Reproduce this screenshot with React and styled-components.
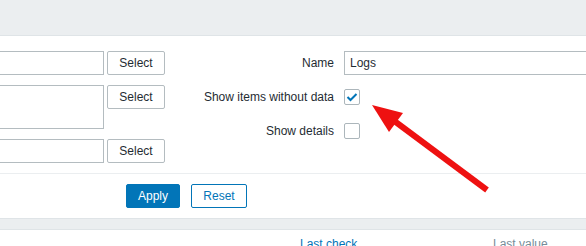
import React from 'react'
import styled, { createGlobalStyle } from 'styled-components'

const GlobalStyle = createGlobalStyle`
  body {
    margin: 0;
    overflow: hidden;
    background: #ffffff;
    font-family: "Liberation Sans", Arial, sans-serif;
    font-size: 12px;
    color: #1f2c33;
  }
`

const Page = styled.div`
  position: relative;
  width: 586px;
  height: 246px;
  overflow: hidden;
`

const TopBand = styled.div`
  height: 35px;
  background: #ebeef0;
  border-bottom: 1px solid #dfe4e7;
`

const Filter = styled.div`
  display: flex;
  align-items: flex-start;
  padding: 15px 0 10px;
  border-bottom: 1px solid #ebeef0;
`

const LeftCol = styled.div`
  margin-left: -40px;
  display: grid;
  grid-template-columns: 144px 58px;
  column-gap: 3px;
  row-gap: 10px;
  align-items: start;
`

const RightCol = styled.div`
  flex: 1;
  display: grid;
  grid-template-columns: 169px 1fr;
  column-gap: 10px;
  row-gap: 10px;
  grid-auto-rows: 24px;
  align-items: center;
`

const Label = styled.label`
  text-align: right;
  white-space: nowrap;
  line-height: 14px;
`

const Field = styled.input`
  box-sizing: border-box;
  height: 24px;
  width: ${p => p.$width || '100%'};
  margin: 0;
  padding: 0 5px;
  border: 1px solid #b4bcc0;
  border-radius: 0;
  background: #fff;
  font: inherit;
  color: #1f2c33;
  outline: none;
`

const Area = styled.div`
  box-sizing: border-box;
  height: 44px;
  border: 1px solid #b4bcc0;
  background: #fff;
`

const SelectButton = styled.button`
  box-sizing: border-box;
  height: 24px;
  width: 58px;
  margin: 0;
  padding: 0;
  border: 1px solid #b4bcc0;
  border-radius: 2px;
  background: #fff;
  font: inherit;
  color: #1f2c33;
`

const Check = styled.span`
  box-sizing: border-box;
  display: flex;
  align-items: center;
  justify-content: center;
  width: 16px;
  height: 16px;
  border: 1px solid #acb6bb;
  border-radius: 2px;
  background: #fff;
`

const Actions = styled.div`
  display: flex;
  gap: 11px;
  padding: 10px 0 10px 126px;
`

const ActionButton = styled.button`
  box-sizing: border-box;
  height: 24px;
  width: ${p => p.$width}px;
  margin: 0;
  padding: 0;
  border: 1px solid #0275b8;
  border-radius: 2px;
  background: ${p => (p.$primary ? '#0275b8' : '#fff')};
  color: ${p => (p.$primary ? '#fff' : '#0275b8')};
  font: inherit;
`

const Band = styled.div`
  height: 10px;
  background: #ebeef0;
  border-top: 1px solid #dfe4e7;
  border-bottom: 1px solid #dfe4e7;
`

const TableHead = styled.div`
  display: flex;
  padding-top: 7px;
  line-height: 14px;
  white-space: nowrap;
`

const HeadCell = styled.span`
  flex: none;
  width: ${p => p.$width}px;
  padding-left: ${p => p.$left || 0}px;
  color: ${p => (p.$link ? '#0275b8' : '#768d99')};
`

const Arrow = styled.svg`
  position: absolute;
  left: 0;
  top: 0;
  pointer-events: none;
`

const Checkbox = ({ checked }) => (
  <Check>
    {checked && (
      <svg width="12" height="12" viewBox="0 0 12 12">
        <polyline
          points="1.5,6 4.5,9 10.5,3"
          fill="none"
          stroke="#0275b8"
          strokeWidth="2"
        />
      </svg>
    )}
  </Check>
)

const App = () => (
  <Page>
    <GlobalStyle />
    <TopBand />
    <Filter>
      <LeftCol>
        <Field />
        <SelectButton type="button">Select</SelectButton>
        <Area />
        <SelectButton type="button">Select</SelectButton>
        <Field />
        <SelectButton type="button">Select</SelectButton>
      </LeftCol>
      <RightCol>
        <Label>Name</Label>
        <Field $width="300px" defaultValue="Logs" />
        <Label>Show items without data</Label>
        <Checkbox checked />
        <Label>Show details</Label>
        <Checkbox />
      </RightCol>
    </Filter>
    <Actions>
      <ActionButton type="button" $primary $width={54}>
        Apply
      </ActionButton>
      <ActionButton type="button" $width={56}>
        Reset
      </ActionButton>
    </Actions>
    <Band />
    <TableHead>
      <HeadCell $width={193} $left={300} $link>
        Last check
      </HeadCell>
      <HeadCell $width={120}>Last value</HeadCell>
    </TableHead>
    <Arrow width="586" height="246" viewBox="0 0 586 246">
      <line x1="393" y1="120" x2="487" y2="190" stroke="#ee1111" strokeWidth="6" />
      <polygon points="372,105 403,113 389,132" fill="#ee1111" />
    </Arrow>
  </Page>
)

export default App
